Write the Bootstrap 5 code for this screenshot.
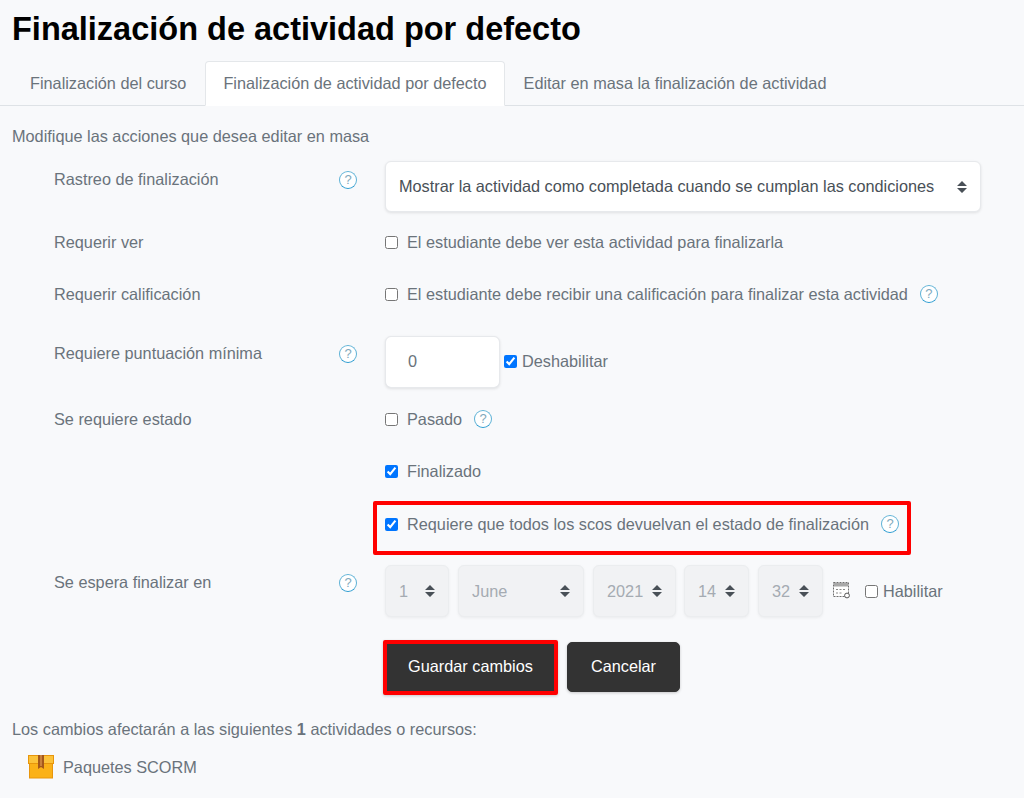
<!DOCTYPE html>
<html lang="es">
<head>
  <meta charset="UTF-8">
  <title>Finalización de actividad por defecto</title>
  <link href="https://cdn.jsdelivr.net/npm/bootstrap@5.3.0/dist/css/bootstrap.min.css" rel="stylesheet">
  <style>
    body {
      background-color: #f8f9fb;
      color: #6a737b;
      font-family: "Liberation Sans", Arial, sans-serif;
      font-size: 16.27px;
      overflow: hidden;
    }
    .page-wrap { height: 798px; padding-top: 10px; }
    .page-title {
      font-family: "Liberation Sans", Arial, sans-serif;
      font-size: 32.5px;
      font-weight: 700;
      line-height: 39px;
      color: #000;
      margin: 0 0 12px 12px;
    }
    .tabs-bar { padding-left: 12px; border-bottom-color: #dee2e6; }
    .tabs-bar .nav-link {
      color: #6a737b;
      padding: 0 17px;
      height: 45px;
      line-height: 43px;
      border-radius: 4px 4px 0 0;
    }
    .tabs-bar .nav-item:first-child { margin-right: 1px; }
    .tabs-bar .nav-item:last-child { margin-left: 1px; }
    .tabs-bar .nav-link.active { color: #6a737b; background: #fff; border-color: #e4e7ea #e4e7ea #fff; }
    .intro { margin: 0 0 0 12px; padding-top: 20px; line-height: 20px; height: 55px; }

    .form-line { display: flex; padding-left: 54px; }
    .line-a { height: 69px; }
    .line-b { height: 52px; }
    .line-c { height: 54px; }
    .line-d { height: 71px; }
    .line-e { height: 42px; }
    .line-f { height: 64px; }
    .line-g { height: 77px; }
    .line-label { width: 285px; flex: none; line-height: 24px; }
    .line-help { width: 46px; flex: none; }
    .top-gap { padding-top: 6px; }
    .top-gap-sm { padding-top: 5px; }
    .top-gap-xs { padding-top: 4px; }
    .help-dot {
      display: inline-block;
      width: 18px;
      height: 18px;
      border: 1px solid #5fb2d6;
      border-bottom-color: #2a9bd0;
      border-radius: 50%;
      color: #7fa9bd;
      font-size: 13px;
      line-height: 16px;
      text-align: center;
      background: #fff;
    }
    .help-gap { margin-left: 3px; }
    .check-row { display: flex; align-items: center; gap: 9px; height: 24px; white-space: nowrap; }
    .check-row.tight { gap: 5px; }
    .check-row.tall { height: 50px; margin-left: 4px; }
    .check-row .form-check-input {
      appearance: auto;
      -webkit-appearance: auto;
      width: 13px; height: 13px; margin: 0; flex: none;
      box-shadow: none; background-image: none;
    }

    .form-select {
      font-size: inherit;
      background-image: url("data:image/svg+xml,%3csvg xmlns='http://www.w3.org/2000/svg' viewBox='0 0 10 12'%3e%3cpath fill='%23495057' d='M5 0l5 5H0zM5 12L0 7h10z'/%3e%3c/svg%3e");
      background-size: 10px 12px;
    }
    .pick-main {
      width: 596px; height: 51px; color: #495057; padding-left: 13px;
      border-color: #e7e9ec; box-shadow: 0 1px 3px rgba(0,0,0,.1);
      background-position: right 13px center;
    }
    .num-box {
      width: 115px; height: 52px; padding: 0 0 2px 22px; color: #6a737b; font-size: inherit;
      border-color: #e7e9ec; box-shadow: 0 1px 3px rgba(0,0,0,.1);
    }
    .date-row { display: flex; align-items: center; align-self: flex-start; }
    .date-row .form-select {
      height: 52px; padding: 0 0 0 13px; margin-right: 9px;
      background-color: #f1f2f4; color: #a5abb2; border-color: #ebedef;
      box-shadow: 0 1px 3px rgba(0,0,0,.06);
      opacity: 1;
      background-position: right 13px center;
    }
    .date-day { width: 64px; }
    .date-month { width: 126px; }
    .date-year { width: 83px; }
    .date-year.form-select { margin-right: 8px; }
    .date-time { width: 65px; }
    .cal-icon { margin: 0 14px 2px 1px; flex: none; }

    .hl-box { border: 4px solid #f00; margin-left: -12px; padding: 7px 8px; width: 538px; height: 54px; border-radius: 2px; }
    .button-row { display: flex; align-items: center; padding-left: 383px; gap: 9px; height: 50px; margin-bottom: 25px; }
    .btn-dark-ui {
      background: #333; border: 1px solid #333; color: #fff; height: 50px; width: 113px;
      padding: 0 0 2px; font-size: inherit; border-radius: 5px;
      box-shadow: 0 1px 3px rgba(0,0,0,.2);
    }
    .btn-save { border: 4px solid #f00; border-radius: 2px; width: 175px; height: 55px; }
    .change-note { margin: 0 0 0 12px; line-height: 24px; height: 26px; }
    .item-row { display: flex; align-items: center; gap: 9px; padding-left: 28px; height: 30px; margin-top: 9px; }
  </style>
</head>
<body>
  <div class="page-wrap">
    <h1 class="page-title">Finalización de actividad por defecto</h1>
    <ul class="nav nav-tabs tabs-bar">
      <li class="nav-item"><a class="nav-link" href="#">Finalización del curso</a></li>
      <li class="nav-item"><a class="nav-link active" href="#">Finalización de actividad por defecto</a></li>
      <li class="nav-item"><a class="nav-link" href="#">Editar en masa la finalización de actividad</a></li>
    </ul>
    <p class="intro">Modifique las acciones que desea editar en masa</p>

    <div class="form-line line-a">
      <div class="line-label top-gap">Rastreo de finalización</div>
      <div class="line-help top-gap-sm"><span class="help-dot">?</span></div>
      <select class="form-select pick-main"><option>Mostrar la actividad como completada cuando se cumplan las condiciones</option></select>
    </div>
    <div class="form-line line-b">
      <div class="line-label">Requerir ver</div>
      <div class="line-help"></div>
      <div class="check-row"><input class="form-check-input" type="checkbox"><span>El estudiante debe ver esta actividad para finalizarla</span></div>
    </div>
    <div class="form-line line-c">
      <div class="line-label">Requerir calificación</div>
      <div class="line-help"></div>
      <div class="check-row"><input class="form-check-input" type="checkbox"><span>El estudiante debe recibir una calificación para finalizar esta actividad</span><span class="help-dot help-gap">?</span></div>
    </div>
    <div class="form-line line-d">
      <div class="line-label top-gap-sm">Requiere puntuación mínima</div>
      <div class="line-help top-gap-xs"><span class="help-dot">?</span></div>
      <input class="form-control num-box" value="0">
      <div class="check-row tight tall"><input class="form-check-input" type="checkbox" checked><span>Deshabilitar</span></div>
    </div>
    <div class="form-line line-b">
      <div class="line-label">Se requiere estado</div>
      <div class="line-help"></div>
      <div class="check-row"><input class="form-check-input" type="checkbox"><span>Pasado</span><span class="help-dot help-gap">?</span></div>
    </div>
    <div class="form-line line-e">
      <div class="line-label"></div>
      <div class="line-help"></div>
      <div class="check-row"><input class="form-check-input" type="checkbox" checked><span>Finalizado</span></div>
    </div>
    <div class="form-line line-f">
      <div class="line-label"></div>
      <div class="line-help"></div>
      <div class="hl-box"><div class="check-row"><input class="form-check-input" type="checkbox" checked><span>Requiere que todos los scos devuelvan el estado de finalización</span><span class="help-dot help-gap">?</span></div></div>
    </div>
    <div class="form-line line-g">
      <div class="line-label top-gap-sm">Se espera finalizar en</div>
      <div class="line-help top-gap-xs"><span class="help-dot">?</span></div>
      <div class="date-row">
        <select class="form-select date-day" disabled><option>1</option></select>
        <select class="form-select date-month" disabled><option>June</option></select>
        <select class="form-select date-year" disabled><option>2021</option></select>
        <select class="form-select date-time" disabled><option>14</option></select>
        <select class="form-select date-time" disabled><option>32</option></select>
        <svg class="cal-icon" width="18" height="17" viewBox="0 0 18 17">
          <rect x=".5" y=".5" width="15" height="14" fill="#fff" stroke="#6f6f6f" stroke-dasharray="2 1"/>
          <rect x="1" y="1" width="14" height="3.5" fill="#a8a8a8"/>
          <path d="M3 7.5h2M6.5 7.5h2M10 7.5h2M3 11h2M6.5 11h2" stroke="#8a8a8a"/>
          <circle cx="14" cy="13.5" r="2.4" fill="#fff" stroke="#555"/>
        </svg>
        <div class="check-row tight"><input class="form-check-input" type="checkbox"><span>Habilitar</span></div>
      </div>
    </div>
    <div class="button-row">
      <button class="btn btn-dark-ui btn-save">Guardar cambios</button>
      <button class="btn btn-dark-ui">Cancelar</button>
    </div>
    <p class="change-note">Los cambios afectarán a las siguientes <strong>1</strong> actividades o recursos:</p>
    <div class="item-row">
      <svg width="26" height="24" viewBox="0 0 26 24">
        <rect x="1.5" y="8" width="23" height="15" fill="#fbb117" stroke="#e8960c"/>
        <rect x=".5" y=".5" width="25" height="8" fill="#fcc33a" stroke="#e8960c"/>
        <path d="M10 0h6v14l-3-2-3 2z" fill="#a5581b"/>
        <path d="M12 0h2v11h-2z" fill="#c9803c"/>
      </svg>
      <span>Paquetes SCORM</span>
    </div>
  </div>
  <script src="https://cdn.jsdelivr.net/npm/bootstrap@5.3.0/dist/js/bootstrap.bundle.min.js"></script>
</body>
</html>
